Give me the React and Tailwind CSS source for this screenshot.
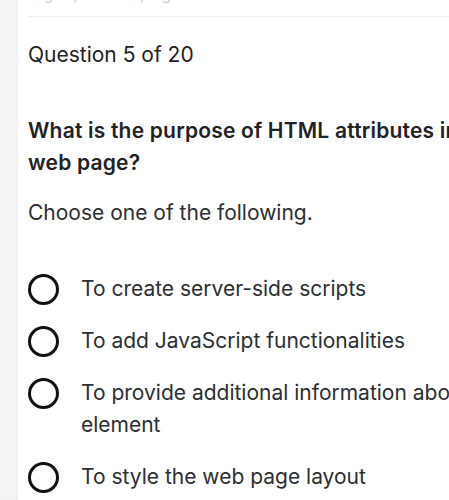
import React from 'react';

const OPTIONS = [
  'To create server-side scripts',
  'To add JavaScript functionalities',
  'To provide additional information about an element',
  'To style the web page layout',
];

export default function App() {
  return (
    <div className="w-[449px] h-[500px] overflow-hidden flex bg-white font-['Inter',sans-serif] text-[#1f2226]">
      {/* left gutter */}
      <div className="w-[18px] shrink-0 bg-[#f5f5f5] shadow-[inset_-1px_0_2px_rgba(0,0,0,0.04)]" />

      <div className="w-[492px] shrink-0 pl-[10px]">
        <div className="-mt-[14px] h-[18px] text-[14px] leading-[18px] text-[#c4c8cc] pl-[4px]">Sign up to track progress</div>
        <div className="h-px bg-[#eceef0] mt-[12px]" />

        <p className="mt-[22px] text-[21px] leading-8">Question 5 of 20</p>

        <h2 className="mt-[44px] text-[21px] leading-8 font-semibold tracking-[0.2px] text-[#1e2227]">
          What is the purpose of HTML attributes in a web page?
        </h2>

        <p className="mt-[18px] text-[21px] leading-8 text-[#2b2f33]">Choose one of the following.</p>

        <div className="mt-[44px] flex flex-col gap-5">
          {OPTIONS.map(o => (
            <label key={o} className="flex items-start gap-[22px]">
              <span className="mt-[1px] w-[31px] h-[31px] shrink-0 rounded-full border-[3px] border-[#111]" />
              <span className="text-[21px] leading-8 text-[#2b2f33]">{o}</span>
            </label>
          ))}
        </div>
      </div>
    </div>
  );
}
